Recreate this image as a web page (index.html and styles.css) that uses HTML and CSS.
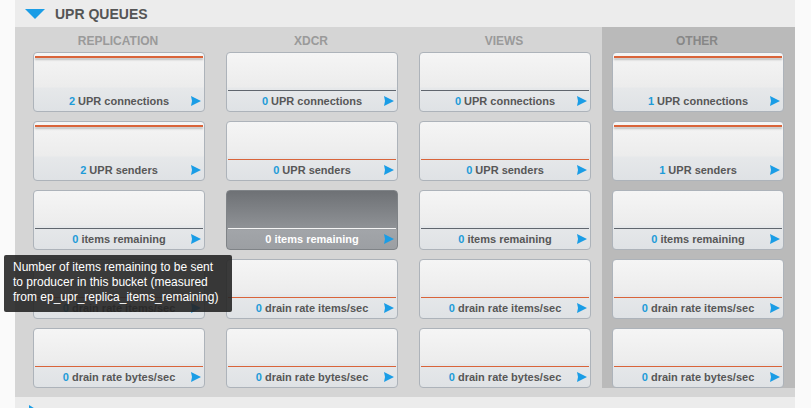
FILE: index.html
```html
<!DOCTYPE html>
<html>
<head>
<meta charset="utf-8">
<link rel="stylesheet" href="styles.css">
</head>
<body>
<div class="page">
  <div class="panel">
    <div class="section-head">
      <svg class="caret-down" width="20" height="10" viewBox="0 0 20 10"><polygon points="0,0 20,0 10,10" fill="#1a9de6"/></svg>
      <span class="title">UPR QUEUES</span>
    </div>
    <div class="grid">
      <div class="col">
        <div class="col-head">REPLICATION</div>
        <div class="card"><div class="graph max"><div class="line orange"></div></div><div class="label"><span class="txt"><b class="num">2</b> UPR connections</span><svg class="play" width="10" height="10" viewBox="0 0 10 10"><polygon points="0,0 10,5 0,10 1,5" fill="#1a9de6"/></svg></div></div>
        <div class="card"><div class="graph max"><div class="line orange"></div></div><div class="label"><span class="txt"><b class="num">2</b> UPR senders</span><svg class="play" width="10" height="10" viewBox="0 0 10 10"><polygon points="0,0 10,5 0,10 1,5" fill="#1a9de6"/></svg></div></div>
        <div class="card"><div class="graph zero"><div class="line gray"></div></div><div class="label"><span class="txt"><b class="num">0</b> items remaining</span><svg class="play" width="10" height="10" viewBox="0 0 10 10"><polygon points="0,0 10,5 0,10 1,5" fill="#1a9de6"/></svg></div></div>
        <div class="card"><div class="graph zero"><div class="line orange"></div></div><div class="label"><span class="txt"><b class="num">0</b> drain rate items/sec</span><svg class="play" width="10" height="10" viewBox="0 0 10 10"><polygon points="0,0 10,5 0,10 1,5" fill="#1a9de6"/></svg></div></div>
        <div class="card"><div class="graph zero"><div class="line orange"></div></div><div class="label"><span class="txt"><b class="num">0</b> drain rate bytes/sec</span><svg class="play" width="10" height="10" viewBox="0 0 10 10"><polygon points="0,0 10,5 0,10 1,5" fill="#1a9de6"/></svg></div></div>
      </div>
      <div class="col">
        <div class="col-head">XDCR</div>
        <div class="card"><div class="graph zero"><div class="line gray"></div></div><div class="label"><span class="txt"><b class="num">0</b> UPR connections</span><svg class="play" width="10" height="10" viewBox="0 0 10 10"><polygon points="0,0 10,5 0,10 1,5" fill="#1a9de6"/></svg></div></div>
        <div class="card"><div class="graph zero"><div class="line orange"></div></div><div class="label"><span class="txt"><b class="num">0</b> UPR senders</span><svg class="play" width="10" height="10" viewBox="0 0 10 10"><polygon points="0,0 10,5 0,10 1,5" fill="#1a9de6"/></svg></div></div>
        <div class="card dark"><div class="graph zero"><div class="line white"></div></div><div class="label"><span class="txt"><b class="num">0</b> items remaining</span><svg class="play" width="10" height="10" viewBox="0 0 10 10"><polygon points="0,0 10,5 0,10 1,5" fill="#1a9de6"/></svg></div></div>
        <div class="card"><div class="graph zero"><div class="line orange"></div></div><div class="label"><span class="txt"><b class="num">0</b> drain rate items/sec</span><svg class="play" width="10" height="10" viewBox="0 0 10 10"><polygon points="0,0 10,5 0,10 1,5" fill="#1a9de6"/></svg></div></div>
        <div class="card"><div class="graph zero"><div class="line orange"></div></div><div class="label"><span class="txt"><b class="num">0</b> drain rate bytes/sec</span><svg class="play" width="10" height="10" viewBox="0 0 10 10"><polygon points="0,0 10,5 0,10 1,5" fill="#1a9de6"/></svg></div></div>
      </div>
      <div class="col">
        <div class="col-head">VIEWS</div>
        <div class="card"><div class="graph zero"><div class="line gray"></div></div><div class="label"><span class="txt"><b class="num">0</b> UPR connections</span><svg class="play" width="10" height="10" viewBox="0 0 10 10"><polygon points="0,0 10,5 0,10 1,5" fill="#1a9de6"/></svg></div></div>
        <div class="card"><div class="graph zero"><div class="line orange"></div></div><div class="label"><span class="txt"><b class="num">0</b> UPR senders</span><svg class="play" width="10" height="10" viewBox="0 0 10 10"><polygon points="0,0 10,5 0,10 1,5" fill="#1a9de6"/></svg></div></div>
        <div class="card"><div class="graph zero"><div class="line gray"></div></div><div class="label"><span class="txt"><b class="num">0</b> items remaining</span><svg class="play" width="10" height="10" viewBox="0 0 10 10"><polygon points="0,0 10,5 0,10 1,5" fill="#1a9de6"/></svg></div></div>
        <div class="card"><div class="graph zero"><div class="line orange"></div></div><div class="label"><span class="txt"><b class="num">0</b> drain rate items/sec</span><svg class="play" width="10" height="10" viewBox="0 0 10 10"><polygon points="0,0 10,5 0,10 1,5" fill="#1a9de6"/></svg></div></div>
        <div class="card"><div class="graph zero"><div class="line orange"></div></div><div class="label"><span class="txt"><b class="num">0</b> drain rate bytes/sec</span><svg class="play" width="10" height="10" viewBox="0 0 10 10"><polygon points="0,0 10,5 0,10 1,5" fill="#1a9de6"/></svg></div></div>
      </div>
      <div class="col other">
        <div class="col-head">OTHER</div>
        <div class="card"><div class="graph max"><div class="line orange"></div></div><div class="label"><span class="txt"><b class="num">1</b> UPR connections</span><svg class="play" width="10" height="10" viewBox="0 0 10 10"><polygon points="0,0 10,5 0,10 1,5" fill="#1a9de6"/></svg></div></div>
        <div class="card"><div class="graph max"><div class="line orange"></div></div><div class="label"><span class="txt"><b class="num">1</b> UPR senders</span><svg class="play" width="10" height="10" viewBox="0 0 10 10"><polygon points="0,0 10,5 0,10 1,5" fill="#1a9de6"/></svg></div></div>
        <div class="card"><div class="graph zero"><div class="line gray"></div></div><div class="label"><span class="txt"><b class="num">0</b> items remaining</span><svg class="play" width="10" height="10" viewBox="0 0 10 10"><polygon points="0,0 10,5 0,10 1,5" fill="#1a9de6"/></svg></div></div>
        <div class="card"><div class="graph zero"><div class="line orange"></div></div><div class="label"><span class="txt"><b class="num">0</b> drain rate items/sec</span><svg class="play" width="10" height="10" viewBox="0 0 10 10"><polygon points="0,0 10,5 0,10 1,5" fill="#1a9de6"/></svg></div></div>
        <div class="card"><div class="graph zero"><div class="line orange"></div></div><div class="label"><span class="txt"><b class="num">0</b> drain rate bytes/sec</span><svg class="play" width="10" height="10" viewBox="0 0 10 10"><polygon points="0,0 10,5 0,10 1,5" fill="#1a9de6"/></svg></div></div>
      </div>
    </div>
    <div class="section-foot">
      <svg class="caret-right" width="8" height="10" viewBox="0 0 8 10"><polygon points="0,0 8,5 0,10" fill="#1a9de6"/></svg>
    </div>
  </div>
  <div class="tooltip">Number of items remaining to be sent<br>to producer in this bucket (measured<br>from ep_upr_replica_items_remaining)</div>
</div>
</body>
</html>
```
FILE: styles.css
```css
html, body {
  margin: 0;
  padding: 0;
  background: #fafafa;
}
body {
  font-family: "Liberation Sans", Arial, Helvetica, sans-serif;
}
.page {
  position: relative;
  width: 811px;
  height: 408px;
  overflow: hidden;
  padding-left: 15px;
  box-sizing: border-box;
}
.panel {
  width: 780px;
  background: #ececec;
}
.section-head {
  height: 27px;
  display: flex;
  align-items: center;
}
.caret-down {
  margin-left: 10px;
  margin-top: 1px;
}
.title {
  margin-left: 10px;
  font-size: 14px;
  font-weight: bold;
  color: #555;
}
.grid {
  display: flex;
  background: #d5d5d5;
  padding: 0 0 9px 8px;
}
.col {
  width: 193px;
  box-sizing: border-box;
  padding: 0 11px 0 10px;
  display: flex;
  flex-direction: column;
  gap: 9px;
}
.col.other {
  background: #bababa;
}
.col-head {
  height: 16px;
  padding-top: 7px;
  margin-bottom: -7px;
  line-height: 14px;
  font-size: 12px;
  font-weight: bold;
  color: #9a9a9a;
  text-align: center;
  padding-right: 2px;
}
.col.other .col-head {
  color: #878787;
}
.card {
  height: 60px;
  box-sizing: border-box;
  border: 1px solid #adb3ba;
  border-radius: 4px;
  background: linear-gradient(#f5f5f5 0px, #ececec 34px, #e6e8ea 35px, #dfe2e5 58px);
  display: flex;
  flex-direction: column;
}
.graph {
  height: 38px;
  padding: 0 1px;
  display: flex;
  flex-direction: column;
}
.graph.zero {
  justify-content: flex-end;
}
.graph.max {
  justify-content: flex-start;
}
.line {
  height: 1px;
}
.graph.max .line {
  margin-top: 3px;
  height: 2px;
  box-shadow: 0 2px 2px rgba(90, 90, 90, 0.35);
}
.line.orange { background: #d9643a; }
.line.gray { background: #60666e; }
.line.white { background: #f4f4f4; }
.label {
  height: 20px;
  display: grid;
  grid-template-columns: 1fr auto 1fr;
  align-items: center;
}
.txt {
  grid-column: 2;
  font-size: 11px;
  font-weight: bold;
  color: #575757;
  white-space: nowrap;
  line-height: 20px;
}
.num {
  color: #1d9bd8;
}
.play {
  grid-column: 3;
  justify-self: end;
  margin-right: 3px;
}
.card.dark {
  border-color: #7f8387;
  background: linear-gradient(#6e7175 0px, #8f9296 37px, #a2a5a9 39px, #9c9fa3 58px);
}
.card.dark .txt,
.card.dark .num {
  color: #fff;
}
.section-foot {
  height: 11px;
  display: flex;
  align-items: flex-start;
}
.caret-right {
  margin-left: 14px;
  margin-top: 8px;
}
.tooltip {
  position: absolute;
  left: 4px;
  top: 255px;
  width: 228px;
  height: 57px;
  box-sizing: border-box;
  padding: 5px 9px;
  background: rgba(38, 38, 38, 0.9);
  color: #fff;
  font-size: 12px;
  line-height: 15px;
  white-space: nowrap;
  border-radius: 2px;
}
```
